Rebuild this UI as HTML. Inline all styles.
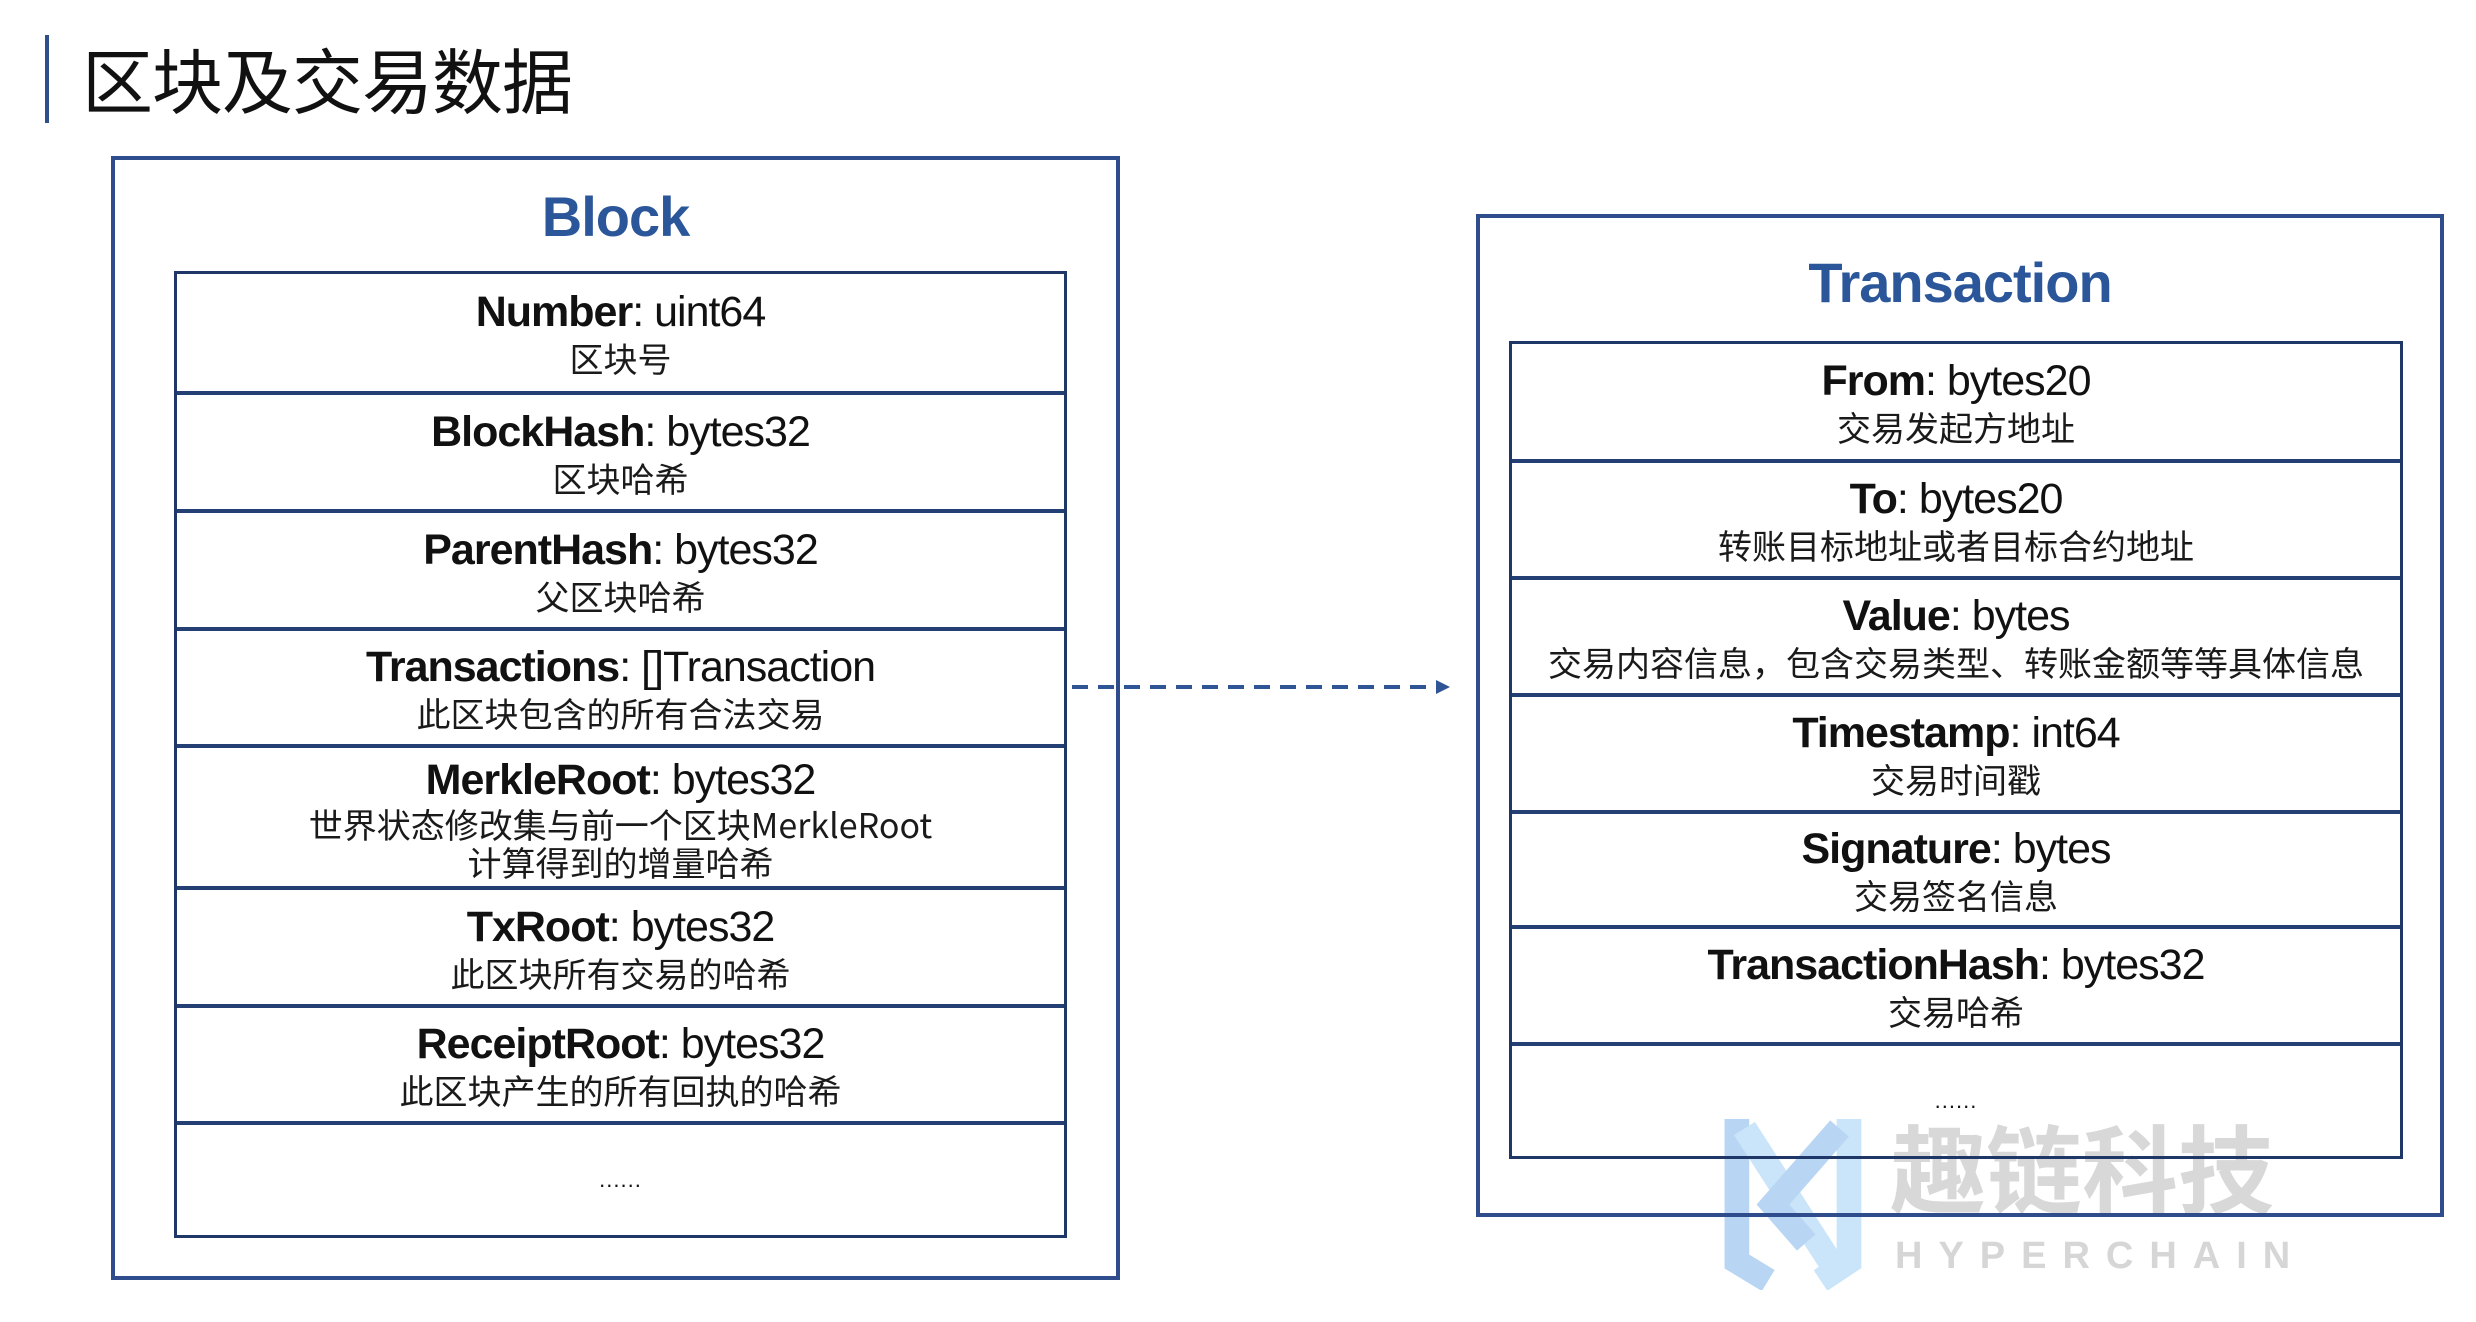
<!DOCTYPE html>
<html><head><meta charset="utf-8">
<style>
html,body{margin:0;padding:0;background:#fff;}
body{width:2476px;height:1322px;position:relative;overflow:hidden;font-family:"Liberation Sans","Noto Sans CJK SC",sans-serif;color:#111;}
.abs{position:absolute;}
.bar{left:45px;top:35px;width:4px;height:88px;background:#2e4f8a;}
.title{left:82px;top:33px;font-size:71px;line-height:90px;font-family:"Noto Sans CJK SC",sans-serif;color:#111;letter-spacing:-1px;}
.box{border:4px solid #2f4d8c;box-sizing:border-box;background:transparent;}
.h{font-weight:bold;color:#2b579a;text-align:center;font-size:56px;letter-spacing:-1px;}
.tbl{border:3px solid #1f3766;box-sizing:border-box;}
.row{position:absolute;left:0;right:0;border-top:4px solid #243f74;box-sizing:border-box;text-align:center;display:flex;flex-direction:column;justify-content:center;align-items:center;}
.row.first{border-top:none;}
.f{font-size:43px;line-height:50px;letter-spacing:-1px;}
.f b{font-weight:bold;}
.s{font-size:34px;line-height:42px;font-family:"Noto Sans CJK SC",sans-serif;color:#1a1a1a;}
.dots{font-size:22px;letter-spacing:1px;}
</style></head><body>
<div class="abs bar"></div>
<div class="abs title">区块及交易数据</div>

<!-- watermark logo -->
<svg class="abs" style="left:1712px;top:1100px" width="160" height="190" viewBox="0 0 160 200">
<g fill="none" stroke-width="26" opacity="0.55">
<path d="M22 20 L22 170 L55 190" stroke="#7fb6ea"/>
<path d="M30 30 L120 170" stroke="#9fd0f5"/>
<path d="M140 20 L140 170 L110 190" stroke="#9fd0f5"/>
<path d="M130 30 L60 110 L95 150" stroke="#7fb6ea"/>
</g>
</svg>
<div class="abs" style="left:1890px;top:1105px;font-size:96px;line-height:120px;font-family:'Noto Sans CJK SC',sans-serif;font-weight:bold;color:#d4d4d4;opacity:0.9;">趣链科技</div>
<div class="abs" style="left:1895px;top:1234px;font-size:38px;line-height:44px;letter-spacing:16px;color:#d6d6d6;font-weight:bold;">HYPERCHAIN</div>

<!-- Block -->
<div class="abs box" style="left:111px;top:156px;width:1009px;height:1124px;"></div>
<div class="abs h" style="left:111px;width:1009px;top:182px;line-height:70px;">Block</div>
<div class="abs tbl" style="left:174px;top:271px;width:893px;height:967px;">
 <div class="row first" style="top:0;height:118px;"><div class="f"><b>Number</b>: uint64</div><div class="s">区块号</div></div>
 <div class="row" style="top:117px;height:119px;"><div class="f"><b>BlockHash</b>: bytes32</div><div class="s">区块哈希</div></div>
 <div class="row" style="top:235px;height:119px;"><div class="f"><b>ParentHash</b>: bytes32</div><div class="s">父区块哈希</div></div>
 <div class="row" style="top:353px;height:118px;"><div class="f"><b>Transactions</b>: []Transaction</div><div class="s">此区块包含的所有合法交易</div></div>
 <div class="row" style="top:470px;height:143px;"><div class="f"><b>MerkleRoot</b>: bytes32</div><div class="s" style="line-height:38px">世界状态修改集与前一个区块MerkleRoot<br>计算得到的增量哈希</div></div>
 <div class="row" style="top:612px;height:119px;"><div class="f"><b>TxRoot</b>: bytes32</div><div class="s">此区块所有交易的哈希</div></div>
 <div class="row" style="top:730px;height:118px;"><div class="f"><b>ReceiptRoot</b>: bytes32</div><div class="s">此区块产生的所有回执的哈希</div></div>
 <div class="row" style="top:847px;height:114px;"><div class="dots">......</div></div>
</div>

<!-- arrow -->
<svg class="abs" style="left:1068px;top:675px" width="390" height="24">
<line x1="4" y1="12" x2="372" y2="12" stroke="#2f5597" stroke-width="4" stroke-dasharray="16 10"/>
<path d="M368 5 L382 12 L368 19 Z" fill="#2f5597"/>
</svg>

<!-- Transaction -->
<div class="abs box" style="left:1476px;top:214px;width:968px;height:1003px;"></div>
<div class="abs h" style="left:1476px;width:968px;top:248px;line-height:70px;">Transaction</div>
<div class="abs tbl" style="left:1509px;top:341px;width:894px;height:818px;">
 <div class="row first" style="top:0;height:116px;"><div class="f"><b>From</b>: bytes20</div><div class="s">交易发起方地址</div></div>
 <div class="row" style="top:115px;height:118px;"><div class="f"><b>To</b>: bytes20</div><div class="s">转账目标地址或者目标合约地址</div></div>
 <div class="row" style="top:232px;height:118px;"><div class="f"><b>Value</b>: bytes</div><div class="s">交易内容信息，包含交易类型、转账金额等等具体信息</div></div>
 <div class="row" style="top:349px;height:118px;"><div class="f"><b>Timestamp</b>: int64</div><div class="s">交易时间戳</div></div>
 <div class="row" style="top:466px;height:116px;"><div class="f"><b>Signature</b>: bytes</div><div class="s">交易签名信息</div></div>
 <div class="row" style="top:581px;height:118px;"><div class="f"><b>TransactionHash</b>: bytes32</div><div class="s">交易哈希</div></div>
 <div class="row" style="top:698px;height:114px;"><div class="dots">......</div></div>
</div>
</body></html>
